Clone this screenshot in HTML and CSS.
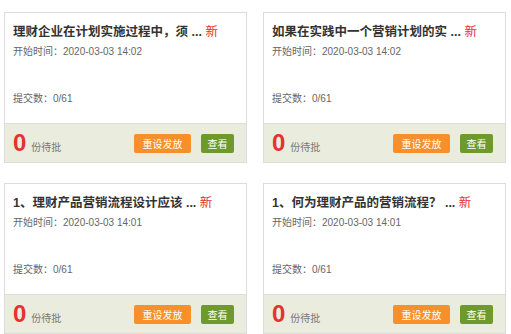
FILE: index.html
```html
<html><head><title>作业列表</title>
<meta charset="utf-8">
<link rel="stylesheet" href="styles.css">
</head>
<body>
  <div class="task-list">
    <div class="task-card">
      <div class="task-body">
        <div class="task-title">理财企业在计划实施过程中，须 ... <span class="new-tag">新</span></div>
        <div class="task-time">开始时间：2020-03-03 14:02</div>
        <div class="task-count">提交数：0/61</div>
      </div>
      <div class="task-footer">
        <div class="pending"><span class="pending-num">0</span><span class="pending-text">份待批</span></div>
        <div class="actions">
          <button class="btn btn-orange">重设发放</button>
          <button class="btn btn-green">查看</button>
        </div>
      </div>
    </div>
    <div class="task-card">
      <div class="task-body">
        <div class="task-title">如果在实践中一个营销计划的实 ... <span class="new-tag">新</span></div>
        <div class="task-time">开始时间：2020-03-03 14:02</div>
        <div class="task-count">提交数：0/61</div>
      </div>
      <div class="task-footer">
        <div class="pending"><span class="pending-num">0</span><span class="pending-text">份待批</span></div>
        <div class="actions">
          <button class="btn btn-orange">重设发放</button>
          <button class="btn btn-green">查看</button>
        </div>
      </div>
    </div>
    <div class="task-card">
      <div class="task-body">
        <div class="task-title">1、理财产品营销流程设计应该 ... <span class="new-tag">新</span></div>
        <div class="task-time">开始时间：2020-03-03 14:01</div>
        <div class="task-count">提交数：0/61</div>
      </div>
      <div class="task-footer">
        <div class="pending"><span class="pending-num">0</span><span class="pending-text">份待批</span></div>
        <div class="actions">
          <button class="btn btn-orange">重设发放</button>
          <button class="btn btn-green">查看</button>
        </div>
      </div>
    </div>
    <div class="task-card">
      <div class="task-body">
        <div class="task-title">1、何为理财产品的营销流程？ ... <span class="new-tag">新</span></div>
        <div class="task-time">开始时间：2020-03-03 14:01</div>
        <div class="task-count">提交数：0/61</div>
      </div>
      <div class="task-footer">
        <div class="pending"><span class="pending-num">0</span><span class="pending-text">份待批</span></div>
        <div class="actions">
          <button class="btn btn-orange">重设发放</button>
          <button class="btn btn-green">查看</button>
        </div>
      </div>
    </div>
  </div>
</body>
</html>
```

FILE: styles.css
```css
  body, html {
    margin: 0;
    padding: 0;
    background: #fff;
    font-family: 'Liberation Sans', 'Noto Sans CJK SC', sans-serif;
    color: #333;
  }
  .task-list {
    display: grid;
    grid-template-columns: 243px 243px;
    column-gap: 16px;
    row-gap: 20px;
    padding: 12px 0 0 4px;
  }
  .task-card {
    border: 1px solid #dcdcdc;
    background: #fff;
  }
  .task-body {
    height: 110px;
    box-sizing: border-box;
    padding: 9px 8px 0 8px;
  }
  .task-title {
    font-size: 12.5px;
    font-weight: bold;
    line-height: 20px;
    color: #333;
    white-space: nowrap;
  }
  .new-tag {
    color: #e5322f;
    font-weight: normal;
  }
  .task-time {
    margin-top: 2px;
    font-size: 10px;
    line-height: 16px;
    color: #666;
  }
  .task-count {
    margin-top: 31px;
    font-size: 10px;
    line-height: 16px;
    color: #666;
  }
  .task-footer {
    height: 38px;
    border-top: 1px solid #dcdcdc;
    background: #eaecdd;
    display: flex;
    align-items: center;
    justify-content: space-between;
    padding: 0 12px 0 8px;
  }
  .pending {
    display: flex;
    align-items: baseline;
  }
  .pending-num {
    font-size: 24px;
    font-weight: bold;
    line-height: 26px;
    color: #e5322f;
  }
  .pending-text {
    margin-left: 5px;
    font-size: 10px;
    color: #777;
  }
  .actions {
    display: flex;
    gap: 10px;
  }
  .btn {
    border: none;
    color: #fff;
    font-family: 'Liberation Sans', 'Noto Sans CJK SC', sans-serif;
    font-size: 10px;
    height: 19px;
    padding: 0;
    border-radius: 2px;
  }
  .btn-orange {
    width: 57px;
    background: #f7902a;
  }
  .btn-green {
    width: 33px;
    background: #6e9a2d;
  }
```
